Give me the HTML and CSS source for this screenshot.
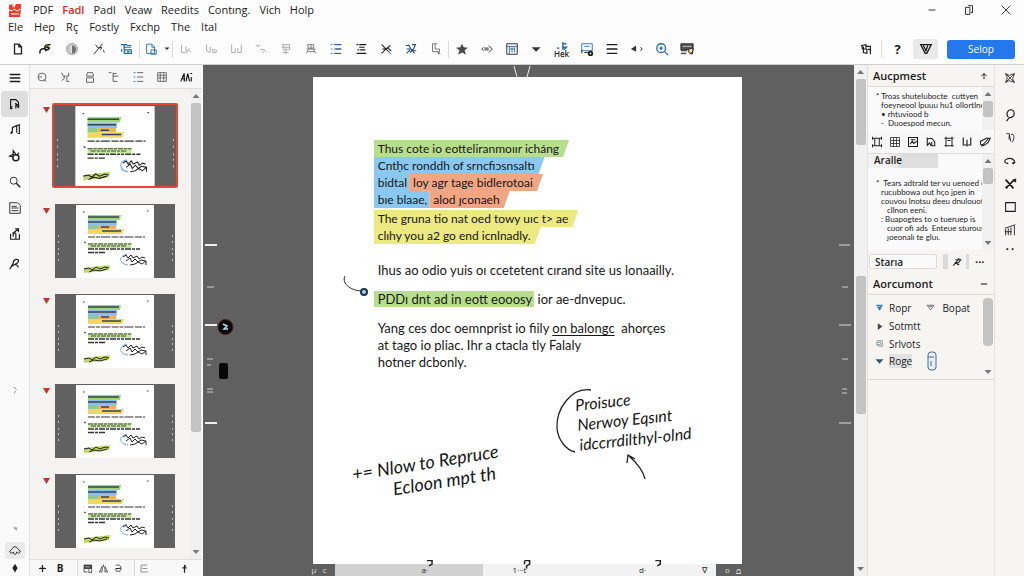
FILE: index.html
```html
<!DOCTYPE html>
<html lang="en">
<head>
<meta charset="utf-8">
<title>PDF</title>
<link rel="stylesheet" href="styles.css">
</head>
<body>
<svg class="defs" aria-hidden="true">
  <symbol id="thumb" viewBox="0 0 120 74" preserveAspectRatio="none">
    <rect width="120" height="74" fill="#616161"/>
    <rect x="21" y="1" width="78" height="73" fill="#fff"/>
    <path d="M33 11h33l-1 5H33z" fill="#9fd873"/><path d="M33 16h29v5H33z" fill="#8fbfe8"/>
    <path d="M33 21h10v5H33z" fill="#8fc98f"/><path d="M43 21h18v4H43z" fill="#e8b45c"/>
    <path d="M33 25h36l-2 5H33z" fill="#f0d860"/><path d="M33 39h44l-1 5H33z" fill="#c3e89c"/>
    <path d="M29 64l26-3-1 5-25 3z" fill="#c3d86a"/>
    <path d="M33 13h31M33 18h28M46 23h8M47 27h19" stroke="#345" stroke-width="1.3"/>
    <path d="M33 33h57" stroke="#333" stroke-width="1.2" stroke-dasharray="7 1 4 1 9 1.500"/>
    <path d="M33 40h43M36 42h36" stroke="#444" stroke-width="1" stroke-dasharray="5 1 3 1"/>
    <path d="M33 45h36M70 45h15M33 48.500h18" stroke="#333" stroke-width="1.300" stroke-dasharray="6 1 3 1"/>
    <path d="M28 8h1.500M92 7h1.500M29 38l2 1" stroke="#333"/>
    <g fill="none" stroke="#222" stroke-width="1"><path d="M68 53l3-2 2 3 3-3 2 3 4-2 2 3 3-2 3 1M71 57l4-3 2 4 3-3 3 3 3-2 5 1M75 61l5-1 3-2 4 2 4-3v4M29 65l5-1 3 2 4-3 4 2 5-2 4 1M34 68l5-2 6 1 7-2"/></g>
    <path d="M72 50c-9 2-8 10 1 11" fill="none" stroke="#6aa6de" stroke-width="1"/>
    <path d="M3.500 31v26M117.500 31v26" stroke="#bbb" stroke-dasharray="2 4 2 5 2 3"/>
  </symbol>
</svg>

<header class="top">
  <div class="titlebar">
    <div class="menus">
      <nav class="menu" aria-label="Main">
        <svg class="logo" viewBox="0 0 14 15"><path d="M1 2l4-1 1 4 2-4h5v6l-1 7H1z" fill="#e5402b"/><path d="M1 7l3 1 2-2 3 2 4-2M3 11h8M5 1v3" stroke="#fff" fill="none"/></svg>
        <a href="#">PDF</a><a href="#" class="red">Fadl</a><a href="#">Padl</a><a href="#">Veaw</a><a href="#">Reedits</a><a href="#">Contıng.</a><a href="#">Vich</a><a href="#">Holp</a>
      </nav>
      <nav class="menu second-row" aria-label="Secondary">
        <a href="#">Ele</a><a href="#">Hep</a><a href="#">Rç</a><a href="#">Fostly</a><a href="#">Fxchp</a><a href="#">The</a><a href="#">Ital</a>
      </nav>
    </div>
    <div class="wincontrols">
      <button aria-label="Minimize"><svg viewBox="0 0 16 16"><path d="M4 8h8"/></svg></button>
      <button aria-label="Restore"><svg viewBox="0 0 16 16"><path d="M4 5h5v8H4zM7 3h5v8h-2"/></svg></button>
      <button aria-label="Close"><svg viewBox="0 0 16 16"><path d="M3 3l10 10M13 3L3 13"/></svg></button>
    </div>
  </div>

  <div class="toolbar">
    <div class="group wide">
      <button aria-label="New"><svg viewBox="0 0 16 16"><path d="M4 2.500h5l3 3v8H4zM9 2.500v3h3" stroke-width="1.500"/></svg></button>
      <button aria-label="Sign"><svg viewBox="0 0 16 16"><path d="M2 13c0-5 3-6 6-5l2 1-2 1M8 8c-1-4 1-5 5-5l-3 3 3 1-2 2" stroke-width="1.700"/><path d="M10 4h3" stroke="#b79a22"/></svg></button>
      <button aria-label="Contrast"><svg viewBox="0 0 16 16"><circle cx="8" cy="8" r="6.500" fill="#c5c5c5" stroke="#aaa"/><path d="M8 4a4 4 0 0 1 0 9z" fill="#707070" stroke="none"/><path d="M7 4v8" stroke="#fff"/></svg></button>
      <button aria-label="Draw"><svg viewBox="0 0 16 16"><path d="M2 14L12 2M4 3l3 4 4-1M11 6l-1 3M13 9l1 3"/></svg></button>
      <button aria-label="Layers"><svg viewBox="0 0 16 16" class="blue"><path d="M2 3h7M6 3v10h8V9H6M9 4h5M5 6h9M3 8v3M9 11h3" stroke-width="1.400"/></svg></button>
    </div>
    <i class="sep"></i>
    <div class="group">
      <button aria-label="Page" class="w20"><svg viewBox="0 0 16 16" class="blue"><path d="M3 2.500h6l3 3V13H3zM9 3v3h3M8 9h6v5H8z"/></svg></button>
      <button aria-label="More pages" class="w10"><svg viewBox="0 0 16 16"><path d="M3 5h10l-5 5z" fill="#333" stroke="none"/></svg></button>
    </div>
    <i class="sep"></i>
    <div class="group">
      <button class="dim" aria-label="Tool 1"><svg viewBox="0 0 16 16"><path d="M3 3v9h4M8 5v7M12 7l-3 5M11 9l3 3"/></svg></button>
      <button class="dim" aria-label="Tool 2"><svg viewBox="0 0 16 16"><path d="M3 3v7l4 2V5M10 8v4h4V9h-3"/></svg></button>
      <button class="dim" aria-label="Tool 3"><svg viewBox="0 0 16 16"><path d="M3 3v9h4V7M10 7v5h4V3"/></svg></button>
      <button class="dim" aria-label="Tool 4"><svg viewBox="0 0 16 16"><path d="M2 4h3M4 6l3-3M7 9l4-1 3 4M10 10v3"/></svg></button>
      <button class="dim" aria-label="Tool 5"><svg viewBox="0 0 16 16"><path d="M3 3h10M3 6h9M5 3v6h7V4M8 6v8M4 12h7"/></svg></button>
      <button class="mid" aria-label="Tool 6"><svg viewBox="0 0 16 16"><path d="M4 3h7v4H5zM3 8h10M5 8l-2 5M11 8l2 5M5 11h7M8 3v5"/></svg></button>
      <button aria-label="List"><svg viewBox="0 0 16 16"><path d="M6 3h8M6 8h8M6 13h8"/><path d="M2 3h2M2 8h2M2 13h2" class="blue"/><path d="M8 3h6M8 8h6" class="blue"/></svg></button>
      <button aria-label="Outline"><svg viewBox="0 0 16 16"><path d="M3 3h2M6 3h8M6 6h6M4 9h2M7 9h6M3 13h11" stroke-width="1.300"/></svg></button>
      <button aria-label="Cut"><svg viewBox="0 0 16 16"><path d="M3 3l9 9M13 4L8 8H4M8 8l-5 5M10 7l4 3" stroke-width="1.200"/><path d="M10 10l4 4" class="blue"/></svg></button>
      <button aria-label="Translate"><svg viewBox="0 0 16 16"><path d="M2 4h4M5 3l3 5 4 5M9 3h4l-2 5-4 4M3 8h5M3 13l4-4M9 10h5" stroke="#244a83" stroke-width="1.300"/></svg></button>
      <button class="mid" aria-label="Crop"><svg viewBox="0 0 16 16"><path d="M4 2h5M4 2v9h7v3M7 2v6h5v4M9 11l4 3"/></svg></button>
    </div>
    <i class="sep"></i>
    <div class="group">
      <button aria-label="Favorite"><svg viewBox="0 0 16 16"><path d="M8 2l2 4 5 .5-4 3 1.500 5L8 12l-4.500 2.500L5 9.500l-4-3L6 6z" fill="#4a4a4a" stroke="none"/></svg></button>
      <button aria-label="Link"><svg viewBox="0 0 16 16"><path d="M4 6L2 8l2 2M5 7h5M5 9h5M10 4l4 4-4 4"/></svg></button>
      <button aria-label="Table"><svg viewBox="0 0 16 16"><path d="M2 2h12v12H2z"/><path d="M2 5h12M5 5v9M8 6v6M11 6v6M5 8h6" class="blue"/></svg></button>
      <button aria-label="More table options"><svg viewBox="0 0 16 16"><path d="M2 6h10l-5 5z" fill="#333" stroke="none"/></svg></button>
      <button class="labelled"><svg viewBox="0 0 16 10" class="blue"><path d="M9 1v6h4l-2 2H8M2 8h3M10 3h3" stroke-width="1.600"/></svg><span>Hek</span></button>
      <button aria-label="Comment"><svg viewBox="0 0 16 16"><path d="M2 2h12v8H2zM5 5h6" class="blue"/><path d="M2 9v4M5 12h5"/><circle cx="12" cy="13" r="2" stroke-width="2"/></svg></button>
      <button aria-label="Menu"><svg viewBox="0 0 16 16"><path d="M2 3h12M2 8h12M2 13h12" stroke-width="1.500"/></svg></button>
      <button aria-label="Back and forward"><svg viewBox="0 0 16 16"><path d="M1 8l6-4v7z" fill="#333" stroke="none"/><path d="M12 6l2 2-2 2"/></svg></button>
      <button aria-label="Zoom in"><svg viewBox="0 0 16 16" class="blue"><circle cx="7" cy="7" r="5" stroke-width="1.500"/><path d="M11 11l4 4M5 7h4M7 5v4" stroke-width="1.600"/></svg></button>
      <button aria-label="Print"><svg viewBox="0 0 16 16"><path d="M1 2h14v7H1z" fill="#555"/><path d="M3 5h10M2 12h6M2 14h5" stroke="#ccc"/><path d="M1 10h7M1 13h6"/><path d="M10 8l5-1-1 7-4-2z" fill="#f3e6a2"/><path d="M11 14l4-4"/></svg></button>
    </div>
    <div class="group end">
      <button aria-label="Find"><svg viewBox="0 0 16 16"><path d="M3 4l5-1v5H4zM5 8v4l4 1V8M8 5h5v9M10 8l3 1M5 5v3" stroke-width="1.300"/></svg></button>
      <i class="sep"></i>
      <button class="help" aria-label="Help">?</button>
      <button class="boxed" aria-label="Filter"><svg viewBox="0 0 16 16"><path d="M2 3h12l-5 10H7zM5 4l3 6 2-6" stroke-width="1.500"/></svg></button>
      <button class="primary">Selop</button>
    </div>
  </div>
</header>

<main class="work">
  <aside class="rail">
    <button class="burger" aria-label="Menu"><svg viewBox="0 0 16 16"><path d="M2 4h12M2 8h12M2 12h12" stroke-width="1.500"/></svg></button>
    <button class="on" aria-label="Pages"><svg viewBox="0 0 16 16"><path d="M3 13V3h6l3 3v6l-3-3v4M5 13c-3 1-3-1 0-2M8 7l5 3" stroke-width="1.300"/></svg></button>
    <button aria-label="Audio"><svg viewBox="0 0 16 16"><path d="M3 12c2 0 2-1 2-3V5l5-2v8M3 12l2-3M10 3l3-1v10h-2" stroke-width="1.300"/></svg></button>
    <button aria-label="Attach"><svg viewBox="0 0 16 16"><circle cx="9" cy="10" r="3.500" stroke-width="1.600"/><path d="M9 6L6 2v4l-4 2 4 1M11 7l1-3" stroke-width="1.400"/></svg></button>
    <button aria-label="Search"><svg viewBox="0 0 16 16"><circle cx="6.500" cy="6.500" r="4"/><path d="M9.500 9.500l4.500 4.500" stroke-width="1.600"/></svg></button>
    <button aria-label="Notes"><svg viewBox="0 0 16 16"><path d="M2 2h9l3 3v9H2zM4 6h6M4 8h8M4 11h8"/></svg></button>
    <button aria-label="Export"><svg viewBox="0 0 16 16"><path d="M3 8v6h10V8M6 11V7l6-5M8 2h4v4M9 7v7M5 7h4" stroke-width="1.300"/></svg></button>
    <button class="gap" aria-label="Sign"><svg viewBox="0 0 16 16"><path d="M2 14l4-7M6 7c0-6 7-5 6-2s-5 3-8 6M8 9c2-1 3 1 4 3" stroke-width="1.400"/></svg></button>
    <button class="push" aria-label="Expand"><svg viewBox="0 0 16 16"><path d="M6 4l4 3M9 9l-2 3" stroke="#666"/></svg></button>
    <button class="push late" aria-label="Collapse"><svg viewBox="0 0 16 16"><path d="M6 6l4 3-1-4" stroke="#555"/></svg></button>
    <button class="on small" aria-label="Cloud"><svg viewBox="0 0 16 16"><path d="M8 3c3 0 3 4 6 5-1 4-3 3-4 1-1 4-3 4-4 0-1 2-4 2-4-1 3-1 3-5 6-5z"/></svg></button>
    <button class="small" aria-label="Marker"><svg viewBox="0 0 16 16"><path d="M8 3l3 5-3 5-3-5z" fill="#222" stroke="none"/></svg></button>
  </aside>

  <section class="pages" aria-label="Page thumbnails">
    <div class="pagetools">
      <button aria-label="Find"><svg viewBox="0 0 16 16"><circle cx="8" cy="8" r="4.500"/><path d="M4 8h4M10 11l3 2"/></svg></button>
      <button aria-label="Split"><svg viewBox="0 0 16 16"><path d="M3 3l2 4h6V3M6 7v3M3 12l3-2M9 8v5h3"/></svg></button>
      <button aria-label="Fit"><svg viewBox="0 0 16 16"><path d="M5 3h6l1 4H4zM4 9h8v5H4z"/></svg></button>
      <button aria-label="Tree"><svg viewBox="0 0 16 16"><path d="M2 3h3M7 3v10h5M7 7h6M7 4h4"/></svg></button>
      <button aria-label="List"><svg viewBox="0 0 16 16"><path d="M7 3h7M7 8h7M7 13h7"/><path d="M3 3h2M3 8h2M3 13h2" class="blue"/></svg></button>
      <button aria-label="Grid"><svg viewBox="0 0 16 16"><path d="M3 3h10v10H3zM3 6h10M3 9h10M6 3v10M10 3v10" stroke-width=".9"/></svg></button>
      <button class="bold" aria-label="Text size"><svg viewBox="0 0 16 16"><path d="M2 13l4-9v9M4 10h3M8 13l2-9 2 9M13 4h2M14 8v5" stroke-width="1.300"/></svg></button>
    </div>
    <div class="pagelist">
      <ol class="thumbs">
        <li class="current"><i class="flag"></i><svg><use href="#thumb"/></svg></li>
        <li><i class="flag"></i><svg><use href="#thumb"/></svg></li>
        <li><i class="flag"></i><svg><use href="#thumb"/></svg></li>
        <li><i class="flag"></i><svg><use href="#thumb"/></svg></li>
        <li><i class="flag"></i><svg><use href="#thumb"/></svg></li>
      </ol>
      <div class="track"><i class="up"></i><i class="grip g-pages"></i><i class="down"></i></div>
    </div>
    <div class="pagefoot">
      <button aria-label="Add"><svg viewBox="0 0 16 16"><path d="M3 8h10M8 3v10M5 7l3 2 3-2" stroke-width="1.700"/></svg></button>
      <button aria-label="Bold" class="letter">B</button>
      <i class="sep"></i>
      <button aria-label="Layout"><svg viewBox="0 0 16 16"><path d="M3 3h11v5H3z" fill="#444"/><path d="M3 8v5h5M10 9v5h4V9M4 5h9" /><path d="M4 5.500h8" stroke="#ddd"/></svg></button>
      <button class="narrow" aria-label="Flip"><svg viewBox="0 0 16 16"><path d="M6 5l-4 8h4zM10 5l4 8h-4zM8 2v4"/></svg></button>
      <button class="narrow" aria-label="Database"><svg viewBox="0 0 16 16"><path d="M4 3h5l3 3-3 2H4M4 8h8l-2 4H5z"/></svg></button>
      <i class="sep"></i>
      <button aria-label="Outline"><svg viewBox="0 0 16 16"><path d="M3 3v10M3 3h9M5 8h7M3 13h10" stroke="#666"/></svg></button>
      <button class="last-tool" aria-label="Options"><svg viewBox="0 0 16 16"><path d="M8 3v11M5 7h6M8 3l2 2" stroke-width="1.700"/></svg></button>
    </div>
  </section>

  <section class="canvas" aria-label="Document">
    <svg class="crease" viewBox="0 0 20 12"><path d="M2 1l3 11M18 1l-3 11" stroke="#eee"/></svg>
    <svg class="ruler left" viewBox="0 0 32 200"><path d="M2 5h12M2 85h12M2 183h12" stroke="#eee" stroke-width="2"/><path d="M4 47h7M4 119h6M4 125h4M4 149h6M4 152h6" stroke="#ccc"/><circle cx="22.500" cy="87" r="7.500" fill="#080808" stroke="#4b2020"/><path d="M20 84l4 2-3 3h4" stroke="#b4dcf5" fill="none" stroke-width="1.500"/><rect x="16" y="123" width="9" height="16" rx="2" fill="#080808"/></svg>
    <svg class="ruler right" viewBox="0 0 16 200"><path d="M2 5h11M2 85h12M2 183h12" stroke="#ddd"/><path d="M5 47h6M5 119h6M5 149h5M5 153h5" stroke="#ccc"/></svg>
    <article class="page">
      <p class="para compact">
        <span class="line"><mark class="green">Thus cote io eotteliranmoıır icháng</mark></span>
        <span class="line"><mark class="sky">Cntḥc ronddh of srncfiɔsnsaltı</mark></span>
        <span class="line"><mark class="sky flat">bidtal</mark><mark class="coral">loy agr tage bidlerotoai</mark></span>
        <span class="line"><mark class="sky flat">bıe blaae,</mark><mark class="coral">alod ȷconaeh</mark></span>
      </p>
      <p class="para compact after">
        <span class="line"><mark class="yellow">The gruna tio nat oed towy uıc t&gt; ae</mark></span>
        <span class="line"><mark class="yellow">clıhy you a2 go end icnlnadly.</mark></span>
      </p>
      <p class="para third">Ihus ao odio yuis oı ccetetent cırand site us lonaailly.</p>
      <p class="para pinned"><svg class="pin" viewBox="0 0 28 22"><path d="M3 1C-1 9 10 16 20 16" stroke="#222" fill="none"/><circle cx="22" cy="17" r="3" fill="#a8d5f3" stroke="#16324c" stroke-width="2"/></svg><mark class="green flat">PDDı dnt ad in eott eooosy</mark> ior ae-dnvepuc.</p>
      <p class="para closing">Yang ces doc oemnprist io fiily <u>on balongc</u>&nbsp; ahorçes<br>at tago io pliac. Ihr a ctacla tly Falaly<br>hotner dcbonly.</p>
      <p class="ink note-left">+= Nlow to Repruce<br><span class="indent">Ecloon mpt th</span></p>
      <p class="ink note-right">Proisuce<br>Nerwoy Eqsınt<br>idccrrdilthyl-olnd</p>
      <svg class="ink-marks" viewBox="0 0 110 100"><path d="M38 4C18 1 3 23 4 42c1 12 9 22 18 24M92 93c-2-9-8-16-16-23M74 77l1-8 7 4" fill="none" stroke="#222" stroke-width="1.300"/></svg>
    </article>
    <footer class="hscroll">
      <span class="dark">µ &nbsp; c</span>
      <div class="hbar"><span>a·</span></div>
      <div class="hrest"><span>1···t</span><span>d·</span></div>
      <span class="white">∇</span>
      <span class="dark">o &nbsp; ⩍</span>
      <svg class="stops" viewBox="0 0 240 14" preserveAspectRatio="none"><path d="M3 2h5v4l-3 2M100 2h5v4l-3 2v3M100 2v4M230 2h5v4l-3 2" stroke="#222" stroke-width="1.500" fill="none"/></svg>
    </footer>
  </section>

  <div class="track doc"><i class="up"></i><i class="grip g-one"></i><i class="grip g-two"></i><i class="down"></i></div>

  <aside class="side">
    <h2>Aucpmest <button aria-label="Collapse"><svg viewBox="0 0 16 16"><path d="M8 13V4M4 8l4-4 4 4" stroke-width="1.500"/></svg></button></h2>
    <div class="scrolled one">
      <div class="tiny"><p>* Troas shutelubocte &nbsp;cuttyen</p><p class="in">foeyneool lpuuu hu1 ollortlner</p><p class="in">• rhtuviood b</p><p class="in">- &nbsp;Duoespod mecun.</p></div>
      <div class="track"><i class="up"></i><i class="grip g-a"></i></div>
    </div>
    <div class="minitools">
      <button aria-label="Align"><svg viewBox="0 0 16 16"><path d="M2 1v4M2 3h12M14 1v4M5 3v10M11 3v10M2 13h12M2 11v4M14 11v4" stroke-width="1.300"/></svg></button>
      <button aria-label="Table"><svg viewBox="0 0 16 16"><path d="M2 2h12v12H2zM2 6h12M2 10h12M6 2v12M10 2v12"/></svg></button>
      <button aria-label="Picture"><svg viewBox="0 0 16 16"><path d="M2 2h12v12H2zM4 11l3-4 2 3 4-3M5 5h6" stroke-width="1.400"/></svg></button>
      <button aria-label="Shape"><svg viewBox="0 0 16 16"><path d="M3 2v11M3 4l6-1 4 5v5H8l-2-4-3 4M9 8v4" stroke-width="1.400"/></svg></button>
      <button aria-label="Frame"><svg viewBox="0 0 16 16"><path d="M2 3h12M4 1v13M12 1v13M2 13h12M6 6h4" stroke-width="1.300"/></svg></button>
      <button aria-label="Merge"><svg viewBox="0 0 16 16"><path d="M3 2v10h5M13 2v10H9M8 5v9" stroke-width="1.500"/></svg></button>
      <button aria-label="Pen"><svg viewBox="0 0 16 16"><path d="M3 14L13 3M2 7l8-4h5l-3 6-6 4-4-2z" stroke-width="1.400"/></svg></button>
    </div>
    <div class="scrolled two">
      <div>
        <h3>Aralle</h3>
        <div class="tiny"><p>* &nbsp;Tears adtrald ter vu uenoed ct</p><p class="in">rucubbowa out hço jpen in</p><p class="in">couvou lnotsu deeu dnulouoty</p><p class="in2">cllnon eeni.</p><p class="in">: Buapogtes to o tueruep is</p><p class="in2">cuor ofi ads &nbsp;Enteue sturous</p><p class="in2">ȷoeonalı te gluı.</p></div>
      </div>
      <div class="track"><i class="up"></i><i class="grip g-b"></i><i class="down"></i></div>
    </div>
    <div class="field">
      <input type="text" value="Starıa" aria-label="Stamp">
      <button class="stamp" aria-label="Edit"><svg viewBox="0 0 16 16"><path d="M3 13l8-10M6 5h7l-3 4H5l6 3" stroke-width="1.400"/></svg></button>
      <button class="dots" aria-label="More">···</button>
    </div>
    <h2 class="plain">Aorcumont <button aria-label="Collapse"><svg viewBox="0 0 16 16"><path d="M3 8h10" stroke-width="1.700"/></svg></button></h2>
    <div class="scrolled three">
      <ul class="tree">
        <li><svg viewBox="0 0 16 16"><path d="M2 3h12L9 13H7z" fill="#3576c9" stroke="none"/><path d="M4 6h6" stroke="#fff"/></svg><span>Ropr</span><svg class="twin" viewBox="0 0 16 16"><path d="M2 4h12l-6 8zM5 6h6"/></svg><span>Bopat</span></li>
        <li><svg viewBox="0 0 16 16"><path d="M5 2l8 6-8 6z" fill="#444" stroke="none"/></svg><span>Sotmtt</span></li>
        <li><svg viewBox="0 0 16 16"><path d="M3 3h10v10H7M3 6h7v4H3zM4 12h3" stroke="#456"/></svg><span>Srlvots</span></li>
        <li><svg viewBox="0 0 16 16"><path d="M1 4h14l-7 8z" fill="#345578" stroke="none"/></svg><span class="sel">Roge</span><svg class="clip" viewBox="0 0 12 20"><rect x="2" y="1" width="8" height="18" rx="3" fill="#e8eef4"/><path d="M2 6h6M5 10v5"/></svg></li>
      </ul>
      <div class="track"><i class="grip g-c"></i><i class="down"></i></div>
    </div>
  </aside>

  <aside class="tools">
    <button aria-label="Select"><svg viewBox="0 0 16 16"><path d="M3 3l10 10M13 3L3 13M3 3l4 2 6-2-2 6 2 4-6-2-4 2 2-5z" stroke-width=".9"/></svg></button>
    <button class="space" aria-label="Lasso"><svg viewBox="0 0 16 16"><path d="M6 10c-3-2-1-8 3-8s6 7 0 9H7l-3 4" stroke-width="1.300"/></svg></button>
    <button aria-label="Clip"><svg viewBox="0 0 16 16"><path d="M4 3h3l2 9M7 5v5M9 4c5-2 4 7 1 9"/></svg></button>
    <button aria-label="Loop"><svg viewBox="0 0 16 16"><path d="M3 10c-3-2 1-5 5-5s7 4 4 6c-2 0-1-2 2-1M3 10l3 1" stroke-width="1.300"/></svg></button>
    <button aria-label="Cut"><svg viewBox="0 0 16 16"><path d="M3 3l9 10M13 3L4 12M11 4l3-1v3M3 11l2 2" stroke-width="2"/></svg></button>
    <button aria-label="Square"><svg viewBox="0 0 16 16"><path d="M3 3h11v10H3z" stroke-width="1.200"/></svg></button>
    <button aria-label="Chart"><svg viewBox="0 0 16 16"><path d="M3 14V7M6 14V6M9 14V5M13 14V3M2 6l12-4M2 10h8"/></svg></button>
    <button class="short" aria-label="More"><svg viewBox="0 0 16 16"><path d="M4 8h2M10 8h2" stroke-width="2"/></svg></button>
  </aside>
</main>
</body>
</html>
```

FILE: styles.css
```css
* { box-sizing: border-box; }
html, body { height: 100%; margin: 0; }
body {
  display: flex;
  flex-direction: column;
  font-family: "Open Sans", "Noto Sans", sans-serif;
  font-size: 11px;
  color: #1c1c1c;
  background: #fdfdfd;
  overflow: hidden;
}
button {
  display: flex;
  align-items: center;
  justify-content: center;
  padding: 0;
  border: 0;
  background: none;
  font: inherit;
  color: inherit;
}
svg { fill: none; stroke: currentColor; flex: none; }
button svg { width: 14px; height: 14px; }
ul, ol, p, h2, h3 { margin: 0; padding: 0; list-style: none; }
.defs { position: absolute; width: 0; height: 0; }
.blue { stroke: #2467b5; }
.sep { width: 1px; height: 17px; background: #dcdcdc; flex: none; }

/* Title bar and menus */
.titlebar { display: flex; justify-content: space-between; height: 36px; }
.menus { padding: 1px 0 0 8px; }
.menu { display: flex; align-items: center; gap: 9px; height: 18px; }
.menu a { color: #1c1c1c; text-decoration: none; line-height: 16px; }
.menu .red { color: #c62f25; font-weight: 600; }
.menu.second-row { gap: 11px; height: 16px; }
.logo { width: 14px; height: 15px; margin-right: 2px; stroke: none; }
.wincontrols { display: flex; height: 19px; }
.wincontrols button { width: 37px; }

/* Main toolbar */
.toolbar { display: flex; align-items: center; height: 28px; padding: 0 9px 2px 4px; }
.group { display: flex; align-items: center; }
.group > button { width: 25px; height: 22px; }
.group.wide > button { width: 27px; }
.group > .w20 { width: 22px; }
.group > .w10 { width: 10px; }
.w10 svg { width: 8px; height: 8px; }
.dim { color: #a3a3a3; }
.mid { color: #6d6d6d; }
.labelled { flex-direction: column; font-size: 8px; line-height: 8px; font-weight: 600; }
.labelled svg { height: 9px; }
.end { margin-left: auto; gap: 3px; }
.group > .boxed { width: 25px; height: 20px; background: #e9e9e9; margin: 0 6px 0 0; border-radius: 2px; }
.help { font-size: 13px; font-weight: 700; }
.group > .primary { width: 68px; height: 19px; border-radius: 3px; background: #2378ee; color: #fff; font-size: 10px; }

/* Work area */
.work {
  flex: 1;
  min-height: 0;
  display: grid;
  grid-template-columns: 30px 173px minmax(0, 1fr) 14px 127px 29px;
  border-top: 1px solid #cfcfcf;
}
.rail { display: flex; flex-direction: column; align-items: center; background: #fafafa; border-right: 1px solid #e2e2e2; }
.rail button { width: 27px; height: 26px; flex: none; }
.rail .on { background: #dedede; border-radius: 3px; }
.rail .gap { margin-top: 4px; }
.rail .small { height: 17px; }
.rail .on.small { width: 20px; background: #eaeaea; }
.rail .push { height: 18px; margin-top: 104px; }
.rail .late { margin-top: auto; margin-bottom: 4px; }
.rail .push svg { width: 12px; height: 12px; }

/* Page thumbnails */
.pages { display: flex; flex-direction: column; min-width: 0; min-height: 0; background: #f4f3f1; border-right: 1px solid #fff; }
.pagetools { display: flex; height: 24px; border-bottom: 1px solid #dedede; background: #f7f7f7; color: #555; }
.pagetools button { width: 24px; }
.pagetools .bold { color: #111; }
.pagelist { flex: 1; min-height: 0; display: flex; overflow: hidden; }
.thumbs { flex: 1; min-width: 0; padding: 14px 12px 0 13px; display: flex; flex-direction: column; gap: 16px; }
.thumbs li { display: flex; gap: 5px; padding-right: 3px; }
.thumbs li > svg { flex: 1; width: 0; min-width: 0; height: 74px; stroke: none; }
.flag { width: 7px; height: 6px; margin-top: 4px; background: #c8342a; clip-path: polygon(0 0, 100% 0, 50% 100%); }
.thumbs .current { gap: 2px; padding-right: 0; }
.thumbs .current > svg { height: 85px; border: 2px solid #dc4938; border-radius: 2px; }
.pagefoot { display: flex; align-items: center; height: 17px; border-top: 1px solid #dedede; background: #f8f8f8; }
.pagefoot button { width: 18px; height: 16px; }
.pagefoot button:first-child { margin-left: 3px; }
.pagefoot .narrow { width: 15px; }
.pagefoot .sep { margin-left: 8px; }
.pagefoot svg { width: 11px; height: 11px; }
.pagefoot .letter { font-weight: 700; font-size: 10px; }
.pagefoot .last-tool { margin: 0 9px 0 auto; }

/* Scrollbars */
.track { width: 12px; flex: none; display: flex; flex-direction: column; align-items: center; background: #f1f1f1; }
.up, .down { width: 7px; height: 4px; margin: 5px 0; background: #777; flex: none; }
.up { clip-path: polygon(50% 0, 100% 100%, 0 100%); }
.down { clip-path: polygon(0 0, 100% 0, 50% 100%); margin-top: auto; }
.grip { width: 10px; background: #c3c3c3; border-radius: 2px; flex: none; }
.g-pages { height: 70%; }
.track.doc { width: 14px; border-right: 1px solid #e0e0e0; }
.g-one { height: 13%; }
.g-two { height: 27%; margin-top: 131px; }
.g-a { height: 16px; }
.g-b { height: 16px; }
.g-c { height: 48px; margin-top: 3px; border-radius: 4px; }

/* Document canvas */
.canvas { position: relative; display: flex; flex-direction: column; align-items: center; min-height: 0; background: #606060; }
.page { position: relative; flex: 1; min-height: 0; width: 66%; margin: 12px 2px 0 0; padding: 63px 0 0 61px; background: #fff; font-family: Lato, sans-serif; font-size: 13px; line-height: 17px; white-space: nowrap; color: #171717; }
.crease { position: absolute; top: 0; left: 309px; width: 20px; height: 12px; }
.ruler { position: absolute; top: 175px; height: 200px; stroke: none; }
.ruler.left { left: 0; width: 32px; }
.ruler.right { right: 1px; width: 16px; }
.compact { font-size: 12px; }
.line { display: flex; height: 17px; }
mark { color: inherit; padding: 0 10px 0 4px; clip-path: polygon(0 0, 100% 0, calc(100% - 6px) 100%, 0 100%); }
.green { background: #b7df8b; }
.sky { background: #8ac8ef; }
.coral { background: #f0a583; }
.yellow { background: #ece981; }
mark.flat { clip-path: none; padding-right: 2px; }
.after { margin-top: 2px; }
.third { margin: 18px 0 0 4px; }
.pinned { position: relative; margin-top: 12px; }
.pin { position: absolute; left: -32px; top: -16px; width: 28px; height: 22px; }
.closing { margin: 12px 0 0 4px; }
.page u { text-underline-offset: 2px; }
.ink { position: absolute; font-style: italic; font-size: 17px; line-height: 21px; transform: rotate(-9deg); }
.note-left { left: 40px; top: 375px; font-size: 18px; }
.note-left .indent { padding-left: 38px; }
.note-right { left: 264px; top: 312px; transform: rotate(-6deg); font-size: 16px; line-height: 20px; }
.ink-marks { position: absolute; left: 240px; top: 309px; width: 110px; height: 100px; }

.hscroll { position: relative; display: grid; grid-template-columns: 32px minmax(0, 39fr) minmax(0, 58fr) 14px 34px; align-self: stretch; height: 12px; margin: 0 104px 0 100px; font-size: 8px; line-height: 12px; }
.dark { color: #ddd; text-align: center; }
.white { background: #f2f2f2; }
.hbar { background: #d1d1d1; text-align: center; }
.hbar span { padding-left: 32px; }
.hrest { display: flex; justify-content: space-between; padding: 0 56px 0 30px; background: #f2f2f2; }
.stops { position: absolute; left: 27%; top: -5px; width: 54%; height: 12px; }

/* Properties side */
.side { min-width: 0; min-height: 0; background: #f7f5f2; border-right: 1px solid #e4e2df; }
.side h2 { display: flex; align-items: center; justify-content: space-between; height: 22px; padding: 0 5px; font-size: 11px; font-weight: 600; border-bottom: 1px solid #dcdad7; }
.side h2 svg { width: 10px; height: 10px; }
.scrolled { display: flex; justify-content: space-between; overflow: hidden; }
.scrolled > :first-child { min-width: 0; flex: 1; }
.tiny { padding: 5px 0 0 8px; font: 8px/9px Lato, sans-serif; white-space: nowrap; color: #222; }
.in { padding-left: 5px; }
.in2 { padding-left: 11px; }
.one { height: 43px; background: #fafafa; }
.minitools { display: flex; justify-content: space-around; align-items: center; height: 24px; border-bottom: 1px solid #dedcda; background: #f8f8f8; }
.minitools svg { width: 12px; height: 12px; }
.two { height: 96px; background: #fafafa; }
.two h3 { width: 70px; height: 14px; padding-left: 6px; font-size: 10px; line-height: 13px; font-weight: 600; background: linear-gradient(90deg, #f2f2f2 30%, #dedede 50%); }
.two .tiny { padding-top: 11px; }
.field { display: flex; align-items: center; height: 23px; padding: 0 2px 0 1px; gap: 6px; }
.field input { width: 68px; height: 15px; padding: 0 5px; border: 1px solid #dcdcdc; border-radius: 2px; background: #fafafa; font: 600 10px "Open Sans", sans-serif; color: #222; }
.field .stamp { width: 26px; height: 15px; border: 1px solid #dadada; border-width: 0 3px 0 5px; background: #f4f4f4; }
.stamp svg { width: 12px; height: 12px; }
.dots { font-weight: 700; }
.three { height: 85px; border-bottom: 1px solid #dcdad7; }
.tree { display: grid; grid-template-rows: 19px 18px 17px 18px; padding: 3px 0 0 7px; font-size: 10px; }
.tree li { display: flex; align-items: center; gap: 5px; }
.tree svg { width: 9px; height: 9px; }
.tree .twin { margin: 0 2px 0 10px; }
.sel { background: #e2e2e2; }
.tree .clip { width: 12px; height: 20px; margin-left: 9px; stroke: #4c6f91; }
.three .track { background: none; }

.tools { display: flex; flex-direction: column; align-items: center; background: #f7f5f2; padding-top: 1px; }
.tools button { width: 24px; height: 23px; }
.tools .space { margin-top: 14px; }
.tools .short { height: 16px; }
```
